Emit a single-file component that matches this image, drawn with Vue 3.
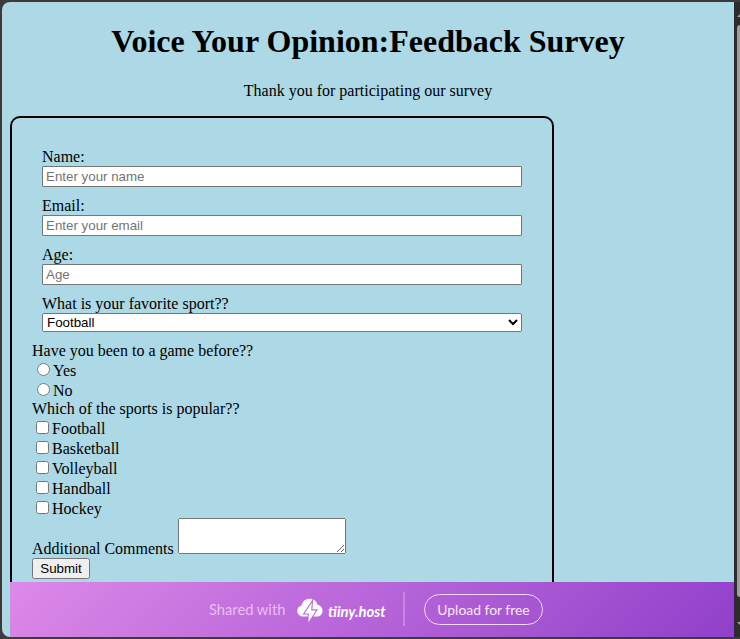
<script setup>
import { ref } from 'vue'

const fields = [
  { id: 'name', label: 'Name:', type: 'text', hint: 'Enter your name' },
  { id: 'email', label: 'Email:', type: 'email', hint: 'Enter your email' },
  { id: 'age', label: 'Age:', type: 'number', hint: 'Age' },
]
const sports = ['Football', 'Basketball', 'Volleyball', 'Handball', 'Hockey']
const favorite = ref('Football')
</script>

<template>
  <div class="window">
    <main class="page">
      <h1>Voice Your Opinion:Feedback Survey</h1>
      <p class="intro">Thank you for participating our survey</p>
      <form class="survey" @submit.prevent>
        <div class="fields">
          <div v-for="f in fields" :key="f.id" class="field">
            <label :for="f.id">{{ f.label }}</label>
            <input :id="f.id" class="text" :type="f.type" :placeholder="f.hint" />
          </div>
          <div class="field">
            <label for="sport">What is your favorite sport??</label>
            <select id="sport" v-model="favorite">
              <option v-for="s in sports" :key="s">{{ s }}</option>
            </select>
          </div>
        </div>
        <div class="question">Have you been to a game before??</div>
        <label v-for="a in ['Yes', 'No']" :key="a" class="choice">
          <input class="radio" type="radio" name="game" :value="a" /><span>{{ a }}</span>
        </label>
        <div class="question">Which of the sports is popular??</div>
        <label v-for="s in sports" :key="s" class="choice">
          <input class="check" type="checkbox" :value="s" /><span>{{ s }}</span>
        </label>
        <div class="comments">
          <label for="comments">Additional Comments</label>
          <textarea id="comments"></textarea>
        </div>
        <button class="submit" type="submit">Submit</button>
      </form>
      <footer class="banner">
        <span class="shared">Shared with</span>
        <svg class="cloud" width="26" height="25" viewBox="0 0 26 25">
          <path fill="#fff" d="M6 18.500C2.500 18.200.3 16 .3 12.900c0-2.800 1.700-4.800 4.300-5.300C5.400 3.500 8.700.8 12.500.8c4 0 7 2.300 8 6.000 3 .6 5 2.900 5 5.900 0 3.400-2.100 5.700-5.500 5.800z" />
          <path fill="#fff" stroke="#bd66db" stroke-width="2.200" paint-order="stroke" d="M14.800 4.500 7.600 15.400h4.200l-.4 8.800 7.600-11.800h-4.800z" />
        </svg>
        <strong class="brand">tiiny.host</strong>
        <span class="divider"></span>
        <a class="upload">Upload for free</a>
      </footer>
    </main>
    <aside class="scrollbar">
      <svg class="arrow" width="3" height="3" viewBox="0 0 3 3"><path d="M0 3 3 0v3z" fill="#a0a0a0" /></svg>
      <span class="thumb"></span>
      <svg class="arrow down" width="3" height="3" viewBox="0 0 3 3"><path d="M0 0h3v3z" fill="#a0a0a0" /></svg>
    </aside>
  </div>
</template>

<style>
body {
  margin: 0;
  overflow: hidden;
}
</style>

<style scoped>
.window {
  box-sizing: border-box;
  width: 740px;
  height: 639px;
  padding: 2px 0 2px 2px;
  display: flex;
  background: #3b3b3b;
  color: #000;
  font: 16px/18px "Liberation Serif", "Times New Roman", serif;
}
.page {
  box-sizing: border-box;
  width: 732px;
  height: 635px;
  padding-left: 8px;
  overflow: hidden;
  display: flex;
  flex-direction: column;
  background: #add8e6;
  border-radius: 8px 0 0 8px;
}
h1 {
  margin: 21px 8px 22px 0;
  font-size: 32px;
  line-height: 37px;
  text-align: center;
}
.intro {
  margin: 0 8px 16px 0;
  text-align: center;
}
h1, .intro { flex: none; }
.survey {
  box-sizing: border-box;
  width: 544px;
  height: 466px;
  flex: none;
  padding: 20px 20px 0;
  border: 2px solid #000;
  border-bottom: 0;
  border-radius: 10px 10px 0 0;
}
.fields {
  padding: 10px;
  display: flex;
  flex-direction: column;
  gap: 10px;
}
.field {
  display: flex;
  flex-direction: column;
}
.text, select {
  box-sizing: border-box;
  width: 480px;
  margin: 0;
  font: 13.333px "Liberation Sans", Arial, sans-serif;
}
.text {
  height: 21px;
  padding: 2px 3px;
  border: 1px solid #767676;
  border-radius: 1px;
}
.text::placeholder { color: #757575; }
select { height: 19px; }
.question { height: 18px; }
.choice {
  display: flex;
  height: 20px;
  align-items: flex-start;
}
.choice span { padding-top: 2px; }
.radio { width: 13px; height: 13px; margin: 3px 3px 0 5px; }
.check { width: 13px; height: 13px; margin: 3px 3px 3px 4px; }
.comments {
  display: flex;
  height: 40px;
  align-items: flex-start;
  gap: 4px;
}
.comments label { padding-top: 22px; }
textarea {
  box-sizing: border-box;
  width: 168px;
  height: 36px;
  margin: 0;
}
.submit {
  display: block;
  box-sizing: border-box;
  width: 58px;
  height: 21px;
  margin: 0;
  padding: 0;
  font: 13.333px "Liberation Sans", Arial, sans-serif;
}
.banner {
  box-sizing: border-box;
  flex: none;
  height: 55px;
  padding-left: 199px;
  display: flex;
  align-items: center;
  background: linear-gradient(135deg, #dd89e8, #9040ca);
  color: #fff;
  font-family: Lato, sans-serif;
}
.shared {
  width: 88px;
  padding-bottom: 2px;
  font-size: 14.700px;
  color: #ebbdf3;
  white-space: nowrap;
}
.cloud {
  flex: none;
  margin-top: 2px;
}
.brand {
  width: 75px;
  margin-left: 5px;
  padding-top: 3px;
  font-size: 14.800px;
  font-style: italic;
  font-weight: 700;
}
.divider {
  width: 2px;
  height: 34px;
  margin-top: -2px;
  background: #c885e3;
}
.upload {
  box-sizing: border-box;
  width: 119px;
  height: 31px;
  margin-left: 19px;
  border: 1px solid #efd9f7;
  border-radius: 16px;
  font-size: 13.900px;
  line-height: 29px;
  text-align: center;
  white-space: nowrap;
  color: #f8eafb;
}
.scrollbar {
  width: 6px;
  display: flex;
  flex-direction: column;
  align-items: flex-end;
  background: #2c2c2c;
}
.arrow {
  flex: none;
  margin-top: 12px;
}
.thumb {
  width: 3px;
  height: 572px;
  margin-top: 8px;
  background: #9f9f9f;
  border-radius: 3px 0 0 3px;
}
.down { margin-top: 25px; }
</style>
